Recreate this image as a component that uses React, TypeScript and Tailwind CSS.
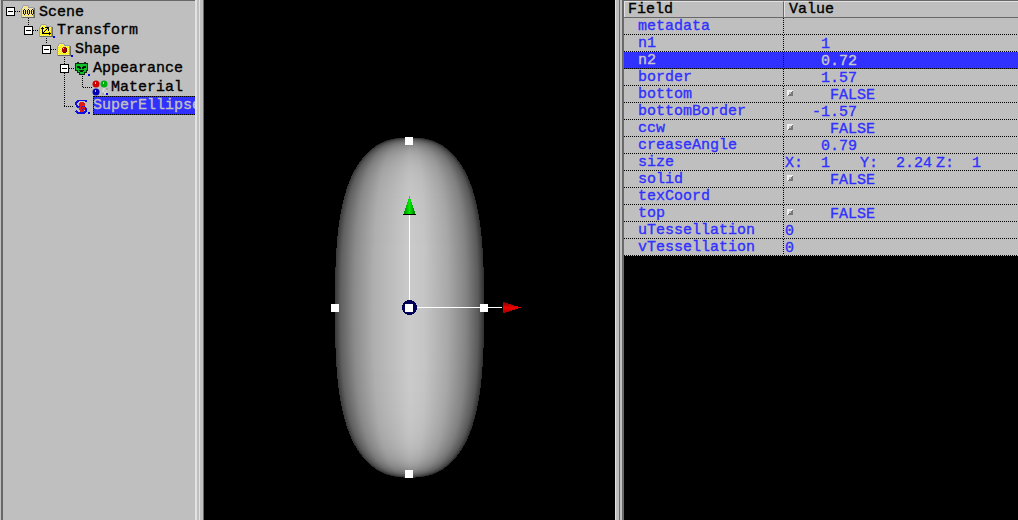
import React from "react";

const text = "font-['Liberation_Mono',monospace] text-[15px] leading-[17px] whitespace-pre [-webkit-text-stroke:0.35px_currentColor]";

function Folder({ kind }: { kind: string }) {
  return (
    <svg width="17" height="16" viewBox="0 0 17 16" shapeRendering="crispEdges">
      <defs>
        <pattern id={`dither-${kind}`} width="2" height="2" patternUnits="userSpaceOnUse">
          <rect width="2" height="2" fill={kind === "scene" ? "#f0dc60" : "#ffe800"} />
          <path d="M0 0h1v1H0zM1 1h1v1H1z" fill={kind === "scene" ? "#f4ecc0" : "#ffff70"} />
        </pattern>
      </defs>
      <path d="M1 4h1V2h1V1h5v1h1v1h5v11H1z" fill="#a0a0a0" />
      <path d="M2 4h1V2h5v2h5v9H2z" fill={`url(#dither-${kind})`} />
      <path d="M2 13.5h12.500V4" fill="none" stroke="#686868" />
      {kind === "scene" && <path d="M3 6h1v4H3zM5 6h1v4H5zM4 5h1v1H4zM4 10h1v1H4zM7 6h1v4H7zM9 6h1v4H9zM8 5h1v1H8zM8 10h1v1H8zM11 6h1v4h-1zM13 6h1v4h-1zM12 5h1v1h-1zM12 10h1v1h-1z" fill="#111" />}
      {kind === "transform" && <path d="M4.500 4v6.500h8M4.500 10.500l5.500-5.500M3 5.500h3M7 4.500h4M10.500 4v4M11.500 9v3" fill="none" stroke="#000" />}
      {kind === "shape" && <><path d="M7 5h3v1h1v4h-1v1H7v-1H6V6h1z" fill="#b00000" /><rect x="7" y="6" width="1" height="1" fill="#ffc0c0" /><path d="M10 6h1v4h-1v1H7v-1h3z" fill="#600000" /></>}
      {kind !== "scene" && <rect x="15" y="13" width="2" height="2" fill="#0000f0" />}
    </svg>
  );
}

function Mask() {
  return (
    <svg width="17" height="16" viewBox="0 0 17 16" shapeRendering="crispEdges">
      <path d="M1 2h2v-1h2v1h5v-1h2v1h2v8h-1v2h-2v2H5v-2H3v-2H1z" fill="#103010" />
      <path d="M2 3h11v6h-1v2h-2v2H6v-2H4V9H2z" fill="#10c028" />
      <path d="M3 5h3v1h1v2H5V7H3zM9 5h3v2h-2v1H8V6h1zM5 9h5v1H9v1H6v-1H5z" fill="#001c00" />
      <rect x="14" y="13" width="2" height="2" fill="#0000f0" />
    </svg>
  );
}

function Balls() {
  return (
    <svg width="17" height="16" viewBox="0 0 17 16">
      <circle cx="4" cy="4" r="3.500" fill="#d00000" />
      <circle cx="12" cy="4" r="3.500" fill="#00b010" />
      <circle cx="4" cy="12" r="3.500" fill="#0000b8" />
      <path d="M3 3h1M11 3h1M3 11h1" stroke="#fff" strokeWidth="1.500" />
      <path d="M11 9h2M10 11h2M12 13h2M14 11h1" stroke="#eee" />
      <path d="M14 9h2M10 14h2" stroke="#888" />
      <rect x="14" y="13" width="2" height="2" fill="#0000f0" />
    </svg>
  );
}

function Super() {
  return (
    <svg width="17" height="16" viewBox="0 0 17 16" shapeRendering="crispEdges">
      <path d="M12 3V1.500H5L2 3.500v2L4 8h6l2 2v2l-2 2H4l-2-2" fill="none" stroke="#1010e0" strokeWidth="1.700" />
      <path d="M6 3h4v1h1v3h-1v1h1v3h-1v2H6v-2H5V8h1V7H5V4h1z" fill="#e01818" />
      <path d="M8 7h1v1H8zM7 8h1v1H7zM9 9h1v1H9zM8 10h1v1H8z" fill="#2020c0" />
      <rect x="14" y="13" width="2" height="2" fill="#0000f0" />
    </svg>
  );
}

const dots = "bg-[repeating-linear-gradient(90deg,#000_0_1px,transparent_1px_2px)]";
const vdots = "bg-[repeating-linear-gradient(180deg,#000_0_1px,transparent_1px_2px)]";

function Toggle() {
  return (
    <span className="flex h-[9px] w-[9px] items-center justify-center border border-black bg-white">
      <span className="h-px w-[5px] bg-black" />
    </span>
  );
}

const nodes = [
  { label: "Scene", pad: "pl-[3px]", icon: <Folder kind="scene" />, toggle: true, gap: "w-[5px]" },
  { label: "Transform", pad: "pl-[21px]", icon: <Folder kind="transform" />, toggle: true, gap: "w-[5px]" },
  { label: "Shape", pad: "pl-[39px]", icon: <Folder kind="shape" />, toggle: true, gap: "w-[5px]" },
  { label: "Appearance", pad: "pl-[57px]", icon: <Mask />, toggle: true, gap: "w-[5px]" },
  { label: "Material", pad: "pl-[80px]", icon: <Balls />, toggle: false, gap: "w-[9px]" },
  { label: "SuperEllipse", pad: "pl-[61px]", icon: <Super />, toggle: false, gap: "w-[10px]" },
];

function Tree() {
  return (
    <div className="flex h-full w-[195px] bg-[#bfbfbf] pl-px">
      <div className="relative min-w-0 flex-1 overflow-hidden border-l-[2px] border-t border-[#686868] pt-px">
        <div className={`absolute left-[25px] top-[17px] h-[8px] w-px ${vdots}`} />
        <div className={`absolute left-[43px] top-[35px] h-[8px] w-px ${vdots}`} />
        <div className={`absolute left-[61px] top-[54px] h-[51px] w-px ${vdots}`} />
        <div className={`absolute left-[79px] top-[75px] h-[11px] w-px ${vdots}`} />
        {nodes.map((n) => (
          <div key={n.label} className={`relative flex h-[19px] items-center ${n.pad}`}>
            {n.toggle && <Toggle />}
            <span className={`h-px shrink-0 ${n.gap} ${dots}`} />
            <span className="w-[19px] shrink-0">{n.icon}</span>
            <span className={`${text} h-[19px] ${n.label === "SuperEllipse" ? "-mt-[2px] bg-[#3030ff] pt-px text-[#c0c0c0] outline-1 -outline-offset-1 outline-dotted outline-black" : n.label === "Scene" ? "pt-[2px] text-black" : "pt-px text-black"}`}>{n.label}</span>
          </div>
        ))}
      </div>
    </div>
  );
}

const CX = 409.5;
const CY = 307.5;

// One entry per scanline: half-width of the solid and how directly it faces the light.
const scanlines = Array.from({ length: 340 }, (_, i) => {
  const y = 138 + i;
  const k = Math.min(Math.abs(y + 0.5 - CY) / 170, 0.9995);
  const sin = Math.pow(k, 1 / 0.72);
  const cos = Math.sqrt(1 - sin * sin);
  const half = 74.5 * Math.pow(cos, 0.72) * (1 - 0.09 * Math.pow(k, 8));
  const a = Math.pow(cos, 1.28) / 75;
  const b = Math.pow(sin, 1.28) / 170;
  return { y, half, light: Math.max(0.36, Math.pow(a / Math.hypot(a, b), 0.6)) };
});

function Viewport() {
  return (
    <svg width="411" height="520" viewBox="204 0 411 520" className="shrink-0 bg-black">
      <defs>
        <linearGradient id="side">
          <stop offset="0" stopColor="#383838" /><stop offset=".04" stopColor="#606060" />
          <stop offset=".13" stopColor="#8b8b8b" /><stop offset=".26" stopColor="#afafaf" />
          <stop offset=".5" stopColor="#cbcbcb" /><stop offset=".6" stopColor="#c5c5c5" />
          <stop offset=".76" stopColor="#a8a8a8" /><stop offset=".88" stopColor="#848484" />
          <stop offset=".96" stopColor="#5b5b5b" /><stop offset="1" stopColor="#303030" />
        </linearGradient>
        <linearGradient id="green"><stop offset="0" stopColor="#008000" /><stop offset=".5" stopColor="#00ed00" /><stop offset="1" stopColor="#007000" /></linearGradient>
        <linearGradient id="red" x1="0" x2="0" y1="0" y2="1"><stop offset="0" stopColor="#800000" /><stop offset=".5" stopColor="#f00000" /><stop offset="1" stopColor="#900000" /></linearGradient>
      </defs>
      <g shapeRendering="crispEdges">
        {scanlines.map((s) => (
          <rect key={s.y} x={CX - s.half} y={s.y} width={s.half * 2} height="1" fill="url(#side)" fillOpacity={s.light} />
        ))}
        <path d="M409.500 214v90M414 307.500h88" stroke="#fff" />
        <path d="M409.500 196l6 18h-12z" fill="url(#green)" />
        <path d="M403 214.500h13" stroke="#000" />
        <path d="M503 302l18 5.500-18 6z" fill="url(#red)" />
        <circle cx="409.500" cy="307.500" r="7.500" fill="#000058" />
        <path d="M405 304h8v8h-8zM405 137h8v8h-8zM405 470h8v8h-8zM331 304h8v8h-8zM480 304h8v8h-8z" fill="#fff" />
      </g>
    </svg>
  );
}

const fields = [
  ["metadata", ""], ["n1", "    1"], ["n2", "    0.72"], ["border", "    1.57"],
  ["bottom", "FALSE"], ["bottomBorder", "   -1.57"], ["ccw", "FALSE"], ["creaseAngle", "    0.79"],
  ["size", "xyz"], ["solid", "FALSE"], ["texCoord", ""], ["top", "FALSE"],
  ["uTessellation", "0"], ["vTessellation", "0"],
];

function Value({ v }: { v: string }) {
  if (v === "FALSE")
    return (
      <div className="flex">
        <svg width="6" height="6" className="ml-[3px] mt-[4px]" shapeRendering="crispEdges"><path d="M0 0h6v6H0z" fill="#777" /><path d="M0 0h6L0 6z" fill="#eee" /><path d="M2 2h2v2H2z" fill="#bbb" /></svg>
        <span className="ml-[37px] mt-px">FALSE</span>
      </div>
    );
  if (v === "xyz")
    return (
      <div className="ml-px mt-px flex"><span className="w-[75px]">X:  1</span><span className="w-[76px]">Y:  2.24</span><span>Z:  1</span></div>
    );
  return <div className="ml-px mt-px">{v}</div>;
}

function Fields() {
  return (
    <div className="flex min-w-0 flex-1 flex-col overflow-hidden border-t border-[#686868]">
      <div className={`${text} flex h-[17px] border-b border-[#686868] bg-[#bfbfbf] text-black`}>
        <div className="w-[160px] border-l border-t border-r border-l-[#e2e2e2] border-t-[#e2e2e2] border-r-[#686868] pl-[3px] leading-[15px]">Field</div>
        <div className="flex-1 border-l border-t border-[#e2e2e2] pl-[4px] leading-[15px]">Value</div>
      </div>
      {fields.map(([name, value]) => (
        <div key={name} className={`${text} h-[17px] shrink-0 ${name === "n2" ? "bg-[#3030ff] text-[#c8c8c8]" : "bg-[#bfbfbf] text-[#3030ff]"}`}>
          <div className="flex h-[16px]">
            <div className="w-[159px] pl-[14px] leading-[17px]">{name}</div>
            <div className={`w-px ${vdots}`} />
            <div className="flex-1"><Value v={value} /></div>
          </div>
          <div className={`h-px ${dots}`} />
        </div>
      ))}
    </div>
  );
}

export default function App() {
  return (
    <div className="flex h-[520px] w-[1018px] overflow-hidden bg-black">
      <Tree />
      <div className="h-full w-[9px] shrink-0 bg-[linear-gradient(90deg,#e2e2e2_0_2px,#bfbfbf_2px_4px,#e2e2e2_4px_5px,#bfbfbf_5px_8px,#686868_8px_9px)]" />
      <Viewport />
      <div className="h-full w-[9px] shrink-0 bg-[linear-gradient(90deg,#e2e2e2_0_1px,#bfbfbf_1px_4px,#686868_4px_5px,#bfbfbf_5px_7px,#686868_7px_9px)]" />
      <Fields />
    </div>
  );
}
